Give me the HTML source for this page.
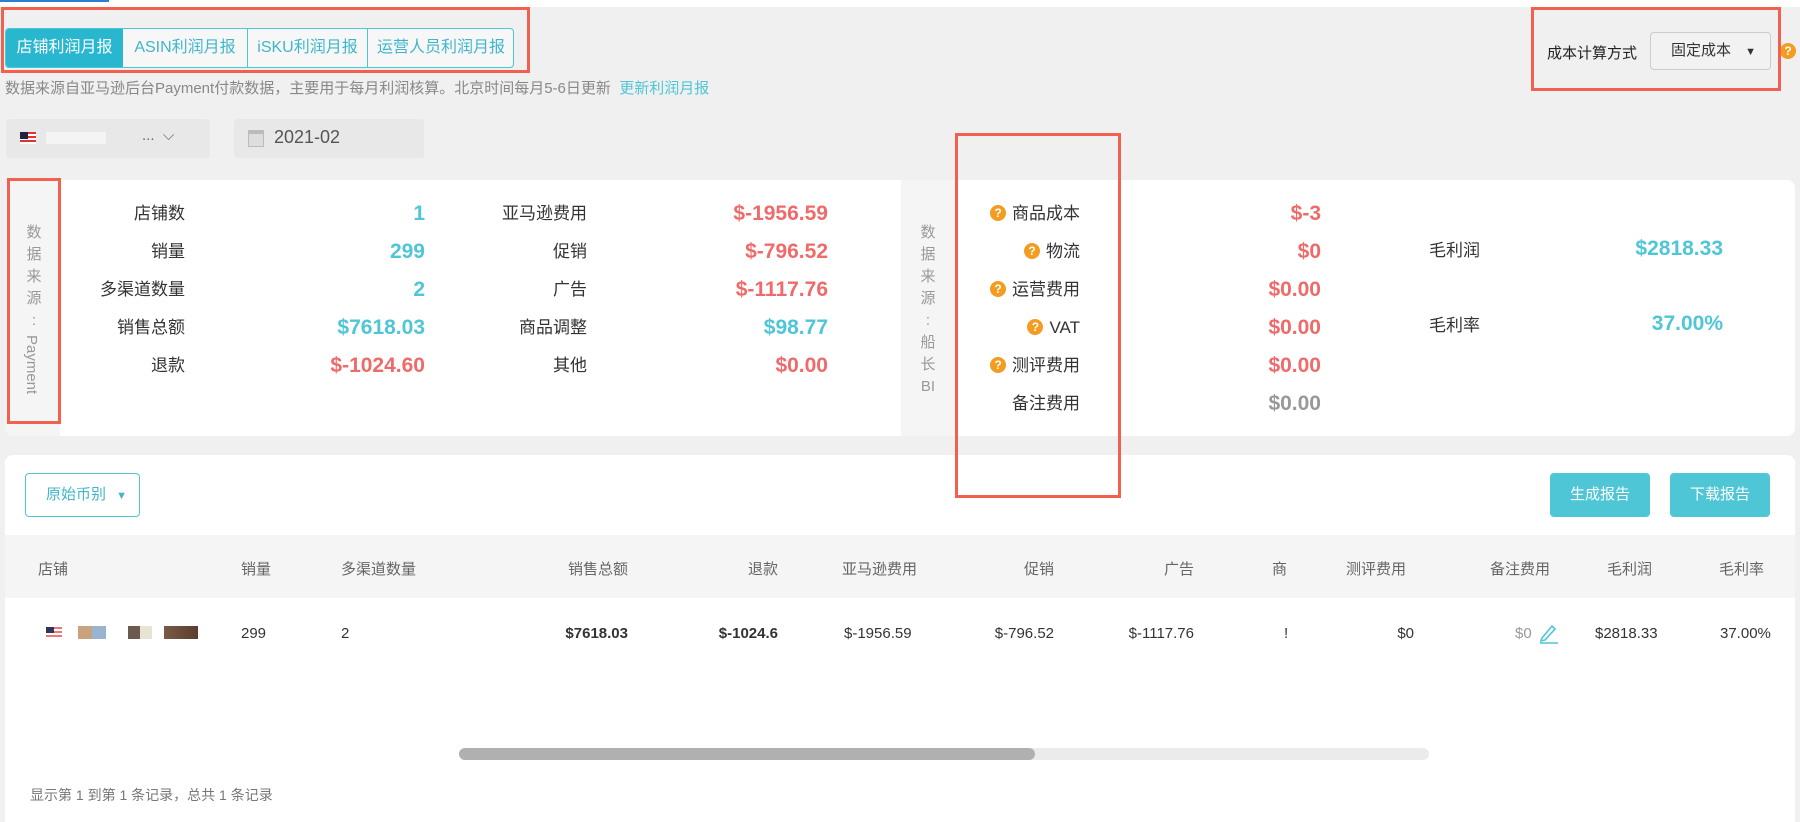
<!DOCTYPE html>
<html><head><meta charset="utf-8"><style>
*{margin:0;padding:0;box-sizing:border-box}
body{width:1800px;height:822px;background:#f0f0f0;font-family:"Liberation Sans","Noto Sans CJK SC",sans-serif;position:relative;overflow:hidden;color:#333}
.a{position:absolute;white-space:nowrap}
.rb{position:absolute;border:3px solid #f2604f}
.r{text-align:right}
.teal{color:#4fc6d6}.red{color:#f06a6a}
.v{font-size:21px;font-weight:bold;line-height:26px}
.l{font-size:17px;line-height:26px;color:#333}
.q{display:inline-block;width:16px;height:16px;border-radius:50%;background:#f39c1f;color:#fff;font-size:12px;font-weight:bold;text-align:center;line-height:16px;margin-right:6px;vertical-align:2px}
.th{font-size:15px;color:#666;top:558px}
.td{font-size:15px;color:#333;top:625px}
</style></head><body>
<div class="a" style="left:0;top:0;width:1800px;height:7px;background:#fff"></div>
<div class="a" style="left:0;top:0;width:109px;height:2px;background:#2a7fd4"></div>

<div class="a" style="left:5px;top:28px;width:509px;height:40px;border:1px solid #4fc6d6;border-radius:4px;background:#f7f7f7;font-size:16px;color:#3fb6cb;line-height:38px">
 <div class="a" style="left:0;top:0;width:117px;height:38px;background:#29b6cf;color:#fff;text-align:center;border-radius:3px 0 0 3px">店铺利润月报</div>
 <div class="a" style="left:117px;top:0;width:124px;text-align:center">ASIN利润月报</div>
 <div class="a" style="left:241px;top:0;width:1px;height:38px;background:#4fc6d6"></div>
 <div class="a" style="left:242px;top:0;width:119px;text-align:center">iSKU利润月报</div>
 <div class="a" style="left:361px;top:0;width:1px;height:38px;background:#4fc6d6"></div>
 <div class="a" style="left:362px;top:0;width:146px;text-align:center">运营人员利润月报</div>
</div>
<div class="rb" style="left:1px;top:7px;width:529px;height:66px"></div>

<div class="a" style="left:5px;top:79px;font-size:15px;color:#888;line-height:20px">数据来源自亚马逊后台Payment付款数据，主要用于每月利润核算。北京时间每月5-6日更新 &nbsp;<span style="color:#4fc6d6">更新利润月报</span></div>

<div class="a" style="left:6px;top:119px;width:204px;height:39px;background:#e8e8e8;border-radius:3px">
 <div class="a" style="left:14px;top:13px;width:16px;height:12px;background:repeating-linear-gradient(#d33 0 2px,#fff 2px 4px)"><div style="width:8px;height:7px;background:#224"></div></div>
 <div class="a" style="left:40px;top:13px;width:60px;height:12px;background:#f4f4f4"></div>
 <div class="a" style="left:136px;top:8px;font-size:15px;color:#666">...&nbsp; ⌵</div>
</div>
<div class="a" style="left:234px;top:119px;width:190px;height:39px;background:#e8e8e8;border-radius:3px">
 <div class="a" style="left:14px;top:11px;width:16px;height:17px;border:1px solid #bbb;background:#ddd;border-top:4px solid #bbb"></div>
 <div class="a" style="left:40px;top:8px;font-size:18px;color:#555">2021-02</div>
</div>

<div class="a" style="left:1547px;top:42px;font-size:15px;color:#222">成本计算方式</div>
<div class="a" style="left:1650px;top:32px;width:121px;height:38px;border:1px solid #ccc;border-radius:4px;background:#f2f2f2;font-size:15px;line-height:36px;padding-left:20px">固定成本 <span style="font-size:11px;margin-left:10px">▼</span></div>
<div class="a" style="left:1780px;top:43px;width:16px;height:16px;border-radius:50%;background:#f39c1f;color:#fff;font-size:12px;font-weight:bold;text-align:center;line-height:16px">?</div>
<div class="rb" style="left:1531px;top:7px;width:250px;height:84px"></div>

<div class="a" style="left:5px;top:180px;width:1790px;height:256px;background:#fff;border-radius:8px;overflow:hidden">
 <div class="a" style="left:0;top:0;width:55px;height:256px;background:#f5f5f5"></div>
 <div class="a" style="left:896px;top:0;width:55px;height:256px;background:#f5f5f5"></div>
</div>
<div class="a" style="left:24px;top:222px;width:20px;font-size:15px;color:#999;line-height:22px;white-space:normal;text-align:center">数<br>据<br>来<br>源<br>:</div>
<div class="a" style="top:335px;font-size:15px;color:#999;transform:rotate(90deg);transform-origin:0 0;left:40px">Payment</div>
<div class="a" style="left:918px;top:222px;width:20px;font-size:15px;color:#999;line-height:22px;white-space:normal;text-align:center">数<br>据<br>来<br>源<br>:<br>船<br>长<br>BI</div>
<div class="rb" style="left:7px;top:178px;width:54px;height:246px"></div>

<div class="a l r" style="left:0;width:185px;top:195px;line-height:38px">店铺数<br>销量<br>多渠道数量<br>销售总额<br>退款</div>
<div class="a v r" style="left:225px;width:200px;top:195px;line-height:38px"><span class="teal">1</span><br><span class="teal">299</span><br><span class="teal">2</span><br><span class="teal">$7618.03</span><br><span class="red">$-1024.60</span></div>
<div class="a l r" style="left:400px;width:187px;top:195px;line-height:38px">亚马逊费用<br>促销<br>广告<br>商品调整<br>其他</div>
<div class="a v r" style="left:628px;width:200px;top:195px;line-height:38px"><span class="red">$-1956.59</span><br><span class="red">$-796.52</span><br><span class="red">$-1117.76</span><br><span class="teal">$98.77</span><br><span class="red">$0.00</span></div>

<div class="a l r" style="left:900px;width:180px;top:195px;line-height:38px"><span class="q">?</span>商品成本<br><span class="q">?</span>物流<br><span class="q">?</span>运营费用<br><span class="q">?</span>VAT<br><span class="q">?</span>测评费用<br>备注费用</div>
<div class="a v r" style="left:1121px;width:200px;top:195px;line-height:38px"><span class="red">$-3</span><br><span class="red">$0</span><br><span class="red">$0.00</span><br><span class="red">$0.00</span><br><span class="red">$0.00</span><br><span style="color:#999">$0.00</span></div>
<div class="a l" style="left:1429px;top:238px">毛利润</div>
<div class="a l" style="left:1429px;top:313px">毛利率</div>
<div class="a v r teal" style="left:1523px;width:200px;top:236px">$2818.33</div>
<div class="a v r teal" style="left:1523px;width:200px;top:311px">37.00%</div>

<div class="a" style="left:5px;top:455px;width:1790px;height:367px;background:#fff;border-radius:8px 8px 0 0"></div>
<div class="rb" style="left:955px;top:133px;width:166px;height:365px"></div>
<div class="a" style="left:25px;top:473px;width:115px;height:44px;border:1px solid #4fc6d6;border-radius:4px;font-size:15px;color:#3fb6cb;line-height:42px;padding-left:20px">原始币别 <span style="font-size:11px;margin-left:6px">▼</span></div>
<div class="a" style="left:1550px;top:473px;width:100px;height:44px;background:#4fc6d6;border-radius:4px;color:#fff;font-size:15px;line-height:44px;text-align:center">生成报告</div>
<div class="a" style="left:1670px;top:473px;width:100px;height:44px;background:#4fc6d6;border-radius:4px;color:#fff;font-size:15px;line-height:44px;text-align:center">下载报告</div>
<div class="a" style="left:5px;top:535px;width:1790px;height:63px;background:#f5f5f5"></div>
<div class="a th" style="left:38px">店铺</div>
<div class="a th" style="left:241px">销量</div>
<div class="a th" style="left:341px">多渠道数量</div>
<div class="a th r" style="left:528px;width:100px">销售总额</div>
<div class="a th r" style="left:678px;width:100px">退款</div>
<div class="a th" style="left:842px">亚马逊费用</div>
<div class="a th r" style="left:954px;width:100px">促销</div>
<div class="a th r" style="left:1094px;width:100px">广告</div>
<div class="a th" style="left:1272px">商</div>
<div class="a th" style="left:1346px">测评费用</div>
<div class="a th" style="left:1490px">备注费用</div>
<div class="a th" style="left:1607px">毛利润</div>
<div class="a th" style="left:1719px">毛利率</div>

<div class="a" style="left:46px;top:627px;width:16px;height:12px;background:repeating-linear-gradient(#e77 0 2px,#fff 2px 4px)"><div style="width:8px;height:6px;background:#335"></div></div>
<div class="a" style="left:78px;top:626px;width:28px;height:13px;background:linear-gradient(90deg,#c9a27e 50%,#9ab4cf 50%)"></div>
<div class="a" style="left:128px;top:626px;width:24px;height:13px;background:linear-gradient(90deg,#6a5a50 50%,#e8e3d3 50%)"></div>
<div class="a" style="left:164px;top:626px;width:34px;height:13px;background:linear-gradient(90deg,#7a5a44,#5a3e30)"></div>
<div class="a td" style="left:241px">299</div>
<div class="a td" style="left:341px">2</div>
<div class="a td r" style="left:528px;width:100px;font-weight:bold">$7618.03</div>
<div class="a td r" style="left:678px;width:100px;font-weight:bold">$-1024.6</div>
<div class="a td" style="left:844px">$-1956.59</div>
<div class="a td r" style="left:954px;width:100px">$-796.52</div>
<div class="a td r" style="left:1094px;width:100px">$-1117.76</div>
<div class="a td" style="left:1284px">!</div>
<div class="a td r" style="left:1314px;width:100px">$0</div>
<div class="a td" style="left:1515px;color:#999">$0</div>
<svg class="a" style="left:1538px;top:622px" width="22" height="22" viewBox="0 0 22 22"><path d="M4 16 L14 4 L17 7 L7 18 L3 19 Z" fill="none" stroke="#4fc6d6" stroke-width="1.6"/><path d="M2 21 H20" stroke="#4fc6d6" stroke-width="1.6"/></svg>
<div class="a td" style="left:1595px">$2818.33</div>
<div class="a td" style="left:1720px">37.00%</div>

<div class="a" style="left:459px;top:748px;width:970px;height:12px;background:#ebebeb;border-radius:6px"></div>
<div class="a" style="left:459px;top:748px;width:576px;height:12px;background:#b0b0b0;border-radius:6px"></div>
<div class="a" style="left:30px;top:785px;font-size:14px;color:#777">显示第 1 到第 1 条记录，总共 1 条记录</div>
</body></html>
